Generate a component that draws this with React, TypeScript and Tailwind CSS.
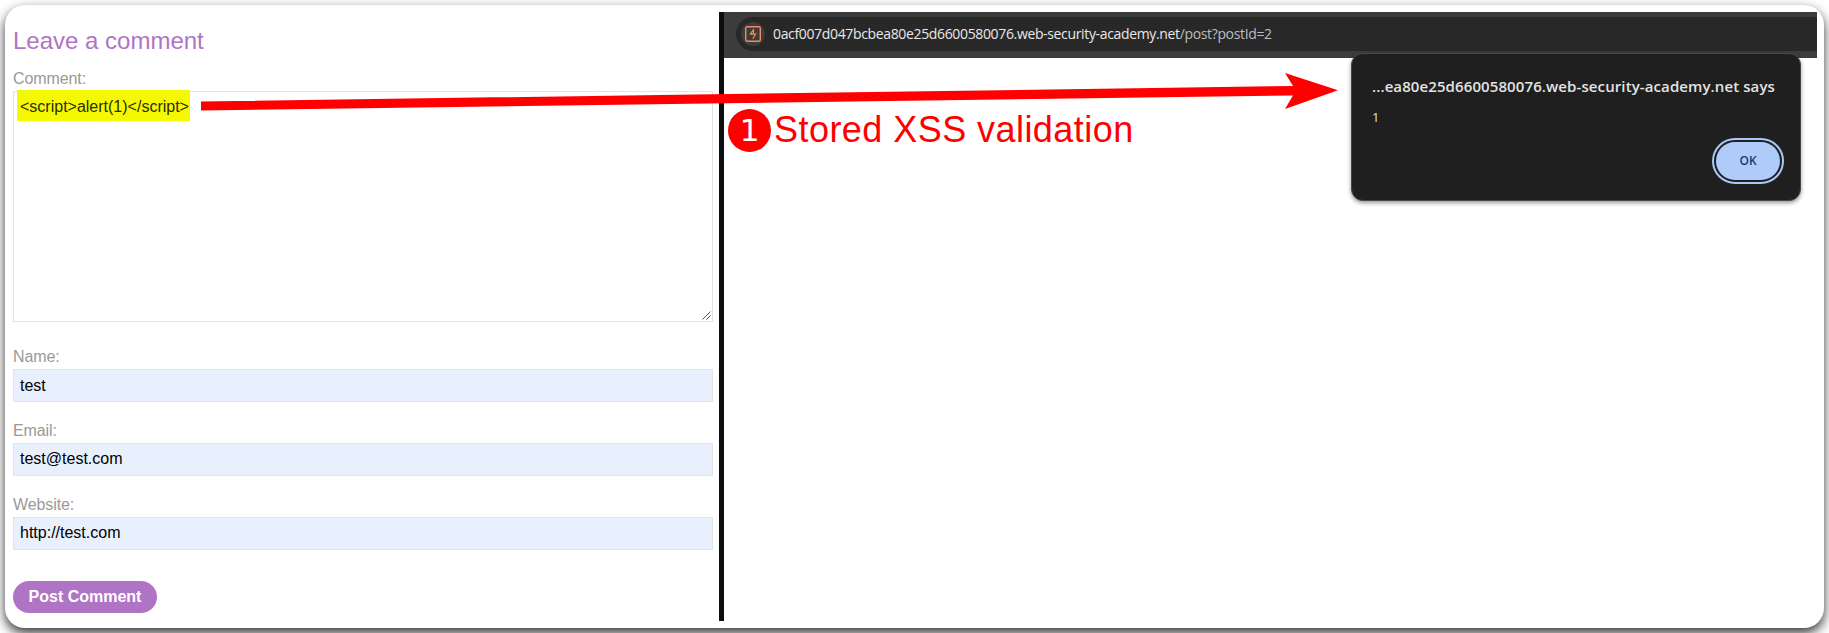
const fields = [
  { label: 'Name:', value: 'test', inset: 'pt-[6px]' },
  { label: 'Email:', value: 'test@test.com', inset: 'pt-[5px]' },
  { label: 'Website:', value: 'http://test.com', inset: 'pt-[5px]' },
];

function CommentForm() {
  return (
    <form className="flex w-[714px] shrink-0 flex-col pl-2 pr-[6px] pt-4 font-['Liberation_Sans',Arial,sans-serif] text-base leading-5">
      <h1 className="h-8 text-[24px] leading-[39px] text-[#af74c3]">Leave a comment</h1>
      <label className="mt-4 h-[22px] tracking-[-0.1px] text-[#999]">Comment:</label>
      <div className="relative h-[231px] border border-[#e3e3e3] px-[6px] pt-[5px] text-black">
        <span className="-mt-[7px] -ml-[3px] inline-block h-[31px] w-[173px] bg-[#f5f900] pl-[3px] pt-[7px] text-[#2c2c05]">
          {'<script>alert(1)</script>'}
        </span>
        <svg className="absolute right-[1px] bottom-[1px]" width="9" height="9" viewBox="0 0 9 9" stroke="#555" fill="none">
          <path d="M.5 8.5l8-8M4.5 8.5l4-4" />
        </svg>
      </div>
      <div className="flex flex-col gap-[19px] pt-[25px]">
        {fields.map((f) => (
          <div key={f.label} className="flex flex-col">
            <label className="h-[22px] tracking-[-0.1px] text-[#999]">{f.label}</label>
            <div className={`h-[33px] border border-[#e3e3e3] bg-[#e8f0fe] px-[6px] text-black ${f.inset}`}>{f.value}</div>
          </div>
        ))}
      </div>
      <button type="button" className="mt-[31px] h-8 w-36 rounded-full bg-[#af74c3] font-bold text-white">
        Post Comment
      </button>
    </form>
  );
}

function AddressBar() {
  return (
    <div className="h-[46px] bg-[#3c3c3c] py-[5px] pl-3">
      <div className="flex h-[34px] items-center rounded-l-full bg-[#282828] pl-[5px]">
        <span className="flex size-6 items-center justify-center rounded-full bg-[#3c3c3c]">
          <svg width="16" height="16" viewBox="0 0 16 16" fill="none" stroke="#f28b60" strokeWidth="1.4">
            <rect x=".7" y=".7" width="14.6" height="14.6" rx="1.5" />
            <path d="M8.8 3.2L5.4 8.2H10.6L7.8 12.8M8.5 3.8V8" strokeWidth="1.2" />
          </svg>
        </span>
        <span className="ml-2 -mt-[2px] whitespace-nowrap font-['Open_Sans','Noto_Sans',sans-serif] text-[14px] tracking-[-0.35px] text-[#e8e8e8]">
          0acf007d047bcbea80e25d6600580076.web-security-academy.net
          <span className="text-[#bdbdbd]">/post?postId=2</span>
        </span>
      </div>
    </div>
  );
}

function AlertDialog() {
  return (
    <div className="absolute top-[48px] left-[1346px] flex h-[148px] w-[450px] flex-col rounded-xl border border-[#484848] bg-[#1f1f1f] pl-5 pr-4 pt-5 font-['Open_Sans','Noto_Sans',sans-serif] text-[#e3e3e3] shadow-[0_2px_4px_rgba(0,0,0,0.4)]">
      <p className="whitespace-nowrap text-[15px] leading-6 font-semibold tracking-[0.1px]">
        ...ea80e25d6600580076.web-security-academy.net says
      </p>
      <p className="mt-[9px] text-[13px] leading-5">1</p>
      <div className="mt-[11px] flex h-[46px] w-[72px] items-center justify-center self-end rounded-full border-2 border-[#a8c7fa] p-[2px]">
        <button type="button" className="h-full w-full rounded-full bg-[#aecbfa] text-[12px] font-semibold text-[#173a75]">
          OK
        </button>
      </div>
    </div>
  );
}

export default function App() {
  return (
    <div className="h-[633px] w-[1829px] overflow-hidden bg-white p-[5px]">
      <div className="relative flex h-[623px] w-[1819px] rounded-[20px] bg-white shadow-[0_5px_12px_rgba(0,0,0,0.8)]">
        <CommentForm />
        <div className="mt-[7px] h-[609px] w-[5px] shrink-0 bg-[#0c0d0e]" />
        <section className="mt-[7px] mr-[7px] flex min-w-0 flex-1 flex-col">
          <AddressBar />
          <div className="mt-[50px] ml-1 flex items-center font-['Liberation_Sans',Arial,sans-serif] text-[36px] leading-[44px] text-[#ff0000]">
            <span className="flex size-[43px] items-center justify-center rounded-full bg-[#ff0000] font-['DejaVu_Sans',sans-serif] text-[31px] leading-[42px] text-white">
              1
            </span>
            <span className="ml-[3px] whitespace-nowrap tracking-[0.45px]">Stored XSS validation</span>
          </div>
        </section>
        <svg className="absolute top-[65px] left-[196px]" width="1140" height="42" viewBox="0 0 1140 42" fill="#ff0000">
          <path d="M0 31.5L1092 16L1084 3L1137 20.3L1084 39L1092 25.5L0 40.5Z" />
        </svg>
        <AlertDialog />
      </div>
    </div>
  );
}
